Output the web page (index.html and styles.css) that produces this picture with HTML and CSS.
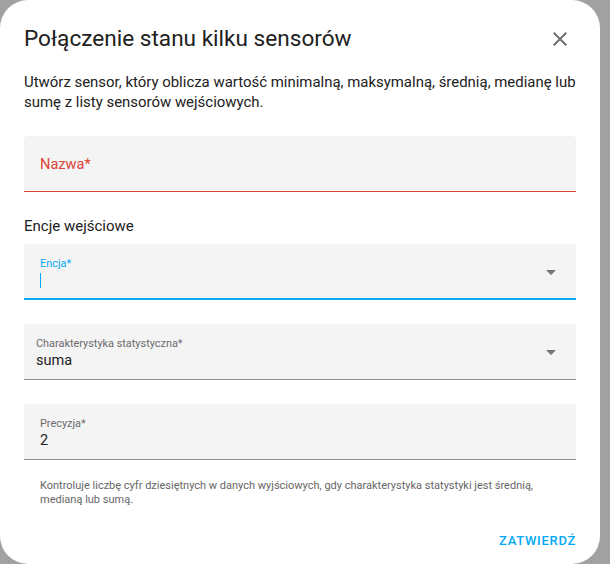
FILE: index.html
```html
<!DOCTYPE html>
<html lang="pl">
<head>
<meta charset="utf-8">
<link rel="stylesheet" href="styles.css">
</head>
<body>
<div class="dialog">
  <div class="header">
    <h2 class="title">Połączenie stanu kilku sensorów</h2>
    <button class="close" aria-label="Zamknij">
      <svg viewBox="0 0 24 24" width="24" height="24"><path d="M19,6.41L17.59,5L12,10.59L6.41,5L5,6.41L10.59,12L5,17.59L6.41,19L12,13.41L17.59,19L19,17.59L13.41,12L19,6.41Z"/></svg>
    </button>
  </div>
  <div class="content">
    <p class="desc">Utwórz sensor, który oblicza wartość minimalną, maksymalną, średnią, medianę lub sumę z listy sensorów wejściowych.</p>

    <div class="field field-error">
      <span class="plain-label">Nazwa*</span>
    </div>

    <div class="section-label">Encje wejściowe</div>

    <div class="field field-focus">
      <div class="field-text">
        <span class="float-label">Encja*</span>
        <span class="value"><span class="caret"></span></span>
      </div>
      <svg class="arrow" viewBox="0 0 24 24" width="24" height="24"><path d="M7,10L12,15L17,10H7Z"/></svg>
    </div>

    <div class="field field-select">
      <div class="field-text">
        <span class="float-label">Charakterystyka statystyczna*</span>
        <span class="value">suma</span>
      </div>
      <svg class="arrow" viewBox="0 0 24 24" width="24" height="24"><path d="M7,10L12,15L17,10H7Z"/></svg>
    </div>

    <div class="field field-plain">
      <div class="field-text">
        <span class="float-label">Precyzja*</span>
        <span class="value">2</span>
      </div>
    </div>
    <p class="helper">Kontroluje liczbę cyfr dziesiętnych w danych wyjściowych, gdy charakterystyka statystyki jest średnią, medianą lub sumą.</p>
  </div>
  <div class="actions">
    <button class="confirm">Zatwierdź</button>
  </div>
</div>
</body>
</html>
```
FILE: styles.css
```css
* { box-sizing: border-box; }
html, body { margin: 0; padding: 0; }
body {
  background: #a1a1a1;
  font-family: Roboto, "Noto Sans", sans-serif;
  color: #212121;
  width: 610px;
  height: 564px;
  overflow: hidden;
}
.dialog {
  width: 600px;
  height: 564px;
  background: #fff;
  border-radius: 28px;
  display: flex;
  flex-direction: column;
}
.header {
  display: flex;
  align-items: center;
  padding: 23px 24px 0 24px;
}
.title {
  flex: 1;
  margin: 0;
  font-size: 22.6px;
  line-height: 32px;
  font-weight: 400;
  color: #212121;
}
.close {
  width: 48px;
  height: 48px;
  margin: -8px -8px -8px 0;
  border: 0;
  background: none;
  padding: 12px;
  display: flex;
  align-items: center;
  justify-content: center;
}
.close svg { fill: #6f6f6f; display: block; }
.content {
  padding: 0 24px;
}
.desc {
  margin: 17px 0 24px;
  font-size: 14.95px;
  line-height: 20px;
  color: #212121;
}
.field {
  height: 56px;
  background: #f4f4f4;
  border-radius: 4px 4px 0 0;
  display: flex;
  align-items: flex-start;
  padding-left: 16px;
  border-bottom: 1px solid #8c8c8c;
}
.field-error {
  border-bottom-color: #db4437;
  align-items: center;
}
.plain-label {
  font-size: 14.6px;
  color: #db4437;
  line-height: 24px;
}
.field-focus {
  border-bottom: 2px solid #03a9f4;
}
.field-select { padding-left: 12px; margin-top: 24px; }
.field-plain { margin-top: 24px; }
.field-text {
  flex: 1;
  display: flex;
  flex-direction: column;
  padding-top: 12px;
}
.float-label {
  font-size: 10.9px;
  line-height: 15px;
  color: #6b6b6b;
}
.field-focus .float-label { color: #03a9f4; }
.value {
  font-size: 14.5px;
  line-height: 19px;
  color: #212121;
  height: 19px;
}
.caret {
  display: inline-block;
  width: 1px;
  height: 15px;
  background: #03a9f4;
  margin-top: 2px;
}
.arrow {
  fill: #757575;
  margin: 16px 13px 0 0;
}
.section-label {
  font-size: 15px;
  line-height: 24px;
  margin: 22px 0 6px;
  color: #212121;
}
.helper {
  margin: 19px 0 0;
  padding: 0 16px;
  font-size: 11px;
  line-height: 14px;
  color: #666;
}
.actions {
  display: flex;
  justify-content: flex-end;
  padding: 15px 16px 0 24px;
}
.confirm {
  border: 0;
  background: none;
  font-family: Roboto, sans-serif;
  text-transform: uppercase;
  font-size: 13px;
  font-weight: 500;
  letter-spacing: 0.7px;
  color: #03a9f4;
  height: 36px;
  padding: 0 8px;
}
```
